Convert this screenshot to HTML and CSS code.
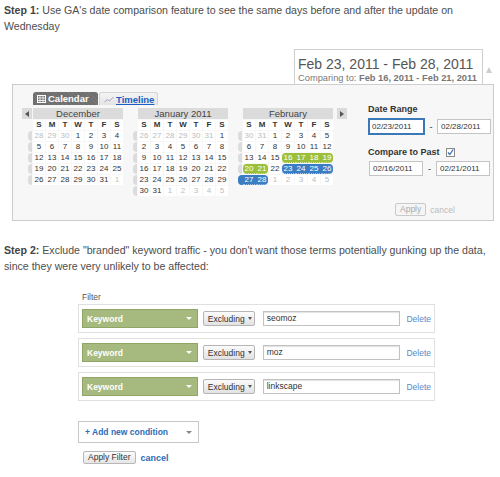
FILE: index.html
```html
<!DOCTYPE html>
<html>
<head>
<meta charset="utf-8">
<link rel="stylesheet" href="styles.css">
</head>
<body>
<p class="para p1"><b>Step 1:</b> Use GA's date comparison feature to see the same days before and after the update on<br>Wednesday</p>

<div class="picker">
  <div class="picker-head">
    <div class="range-box">
      <div class="range-main">Feb 23, 2011 - Feb 28, 2011</div>
      <div class="range-cmp">Comparing to: <b>Feb 16, 2011 - Feb 21, 2011</b></div>
    </div>
    <div class="range-arrow"><i class="tri-up"></i></div>
  </div>
  <div class="panel">
    <div class="cal">
      <div class="tabs">
        <div class="tab tab-on">
          <svg class="ico" width="9" height="8" viewBox="0 0 9 8"><rect x="0.5" y="0.5" width="8" height="7" fill="none" stroke="#fff"/><path d="M0 3h9M0 5.5h9M3 0v8M6 0v8" stroke="#fff" stroke-width="0.8"/></svg>
          <span>Calendar</span>
        </div>
        <div class="tab tab-off">
          <svg class="ico" width="10" height="7" viewBox="0 0 10 7"><path d="M0.5 6L3.5 3.5L5.5 5L9.5 1" fill="none" stroke="#9aa6b4" stroke-width="1"/></svg>
          <a href="#">Timeline</a>
        </div>
      </div>
      <div class="months">
        <div class="month dec">
          <div class="mrow"><div class="lead"><span class="nav"><i class="tri-left"></i></span></div><div class="mhead">December</div></div>
          <div class="mrow"><div class="lead"></div><div class="cells dow"><span>S</span><span>M</span><span>T</span><span>W</span><span>T</span><span>F</span><span>S</span></div></div>
          <div class="mrow"><div class="lead"><i class="blob"></i></div><div class="cells"><span class="o">28</span><span class="o">29</span><span class="o">30</span><span>1</span><span>2</span><span>3</span><span>4</span></div></div>
          <div class="mrow"><div class="lead"><i class="blob"></i></div><div class="cells"><span>5</span><span>6</span><span>7</span><span>8</span><span>9</span><span>10</span><span>11</span></div></div>
          <div class="mrow"><div class="lead"><i class="blob"></i></div><div class="cells"><span>12</span><span>13</span><span>14</span><span>15</span><span>16</span><span>17</span><span>18</span></div></div>
          <div class="mrow"><div class="lead"><i class="blob"></i></div><div class="cells"><span>19</span><span>20</span><span>21</span><span>22</span><span>23</span><span>24</span><span>25</span></div></div>
          <div class="mrow"><div class="lead"><i class="blob"></i></div><div class="cells"><span>26</span><span>27</span><span>28</span><span>29</span><span>30</span><span>31</span><span class="o">1</span></div></div>
        </div>
        <div class="month jan">
          <div class="mrow"><div class="lead"></div><div class="mhead">January 2011</div></div>
          <div class="mrow"><div class="lead"></div><div class="cells dow"><span>S</span><span>M</span><span>T</span><span>W</span><span>T</span><span>F</span><span>S</span></div></div>
          <div class="mrow"><div class="lead"><i class="blob"></i></div><div class="cells"><span class="o">26</span><span class="o">27</span><span class="o">28</span><span class="o">29</span><span class="o">30</span><span class="o">31</span><span>1</span></div></div>
          <div class="mrow"><div class="lead"><i class="blob"></i></div><div class="cells"><span>2</span><span>3</span><span>4</span><span>5</span><span>6</span><span>7</span><span>8</span></div></div>
          <div class="mrow"><div class="lead"><i class="blob"></i></div><div class="cells"><span>9</span><span>10</span><span>11</span><span>12</span><span>13</span><span>14</span><span>15</span></div></div>
          <div class="mrow"><div class="lead"><i class="blob"></i></div><div class="cells"><span>16</span><span>17</span><span>18</span><span>19</span><span>20</span><span>21</span><span>22</span></div></div>
          <div class="mrow"><div class="lead"><i class="blob"></i></div><div class="cells"><span>23</span><span>24</span><span>25</span><span>26</span><span>27</span><span>28</span><span>29</span></div></div>
          <div class="mrow"><div class="lead"><i class="blob"></i></div><div class="cells"><span>30</span><span>31</span><span class="o">1</span><span class="o">2</span><span class="o">3</span><span class="o">4</span><span class="o">5</span></div></div>
        </div>
        <div class="month feb">
          <div class="mrow"><div class="lead"></div><div class="mhead">February</div></div>
          <div class="mrow"><div class="lead"></div><div class="cells dow"><span>S</span><span>M</span><span>T</span><span>W</span><span>T</span><span>F</span><span>S</span></div></div>
          <div class="mrow"><div class="lead"><i class="blob"></i></div><div class="cells"><span class="o">30</span><span class="o">31</span><span>1</span><span>2</span><span>3</span><span>4</span><span>5</span></div></div>
          <div class="mrow"><div class="lead"><i class="blob"></i></div><div class="cells"><span>6</span><span>7</span><span>8</span><span>9</span><span>10</span><span>11</span><span>12</span></div></div>
          <div class="mrow"><div class="lead"><i class="blob"></i></div><div class="cells"><span>13</span><span>14</span><span>15</span><span class="g s">16</span><span class="g">17</span><span class="g">18</span><span class="g e">19</span></div></div>
          <div class="mrow"><div class="lead"><i class="blob"></i></div><div class="cells"><span class="g s">20</span><span class="g e">21</span><span>22</span><span class="b s">23</span><span class="b">24</span><span class="b">25</span><span class="b e">26</span></div></div>
          <div class="mrow"><div class="lead"><i class="blob blob-b"></i></div><div class="cells"><span class="b">27</span><span class="b e">28</span><span class="o">1</span><span class="o">2</span><span class="o">3</span><span class="o">4</span><span class="o">5</span></div></div>
        </div>
        <span class="nav nav-next"><i class="tri-right"></i></span>
      </div>
    </div>

    <div class="form">
      <div class="flabel">Date Range</div>
      <div class="frow">
        <div class="inp focus">02/23/2011</div>
        <span class="dash">-</span>
        <div class="inp">02/28/2011</div>
      </div>
      <div class="flabel cmp">
        <span>Compare to Past</span>
        <svg class="chk" width="9" height="9" viewBox="0 0 9 9"><rect x="0.5" y="0.5" width="8" height="8" fill="#fff" stroke="#8a8a8a"/><path d="M2 4.5L3.8 6.5L7.2 1.5" fill="none" stroke="#3a6fb5" stroke-width="1.3"/></svg>
      </div>
      <div class="frow frow2">
        <div class="inp">02/16/2011</div>
        <span class="dash">-</span>
        <div class="inp">02/21/2011</div>
      </div>
      <div class="apply-row">
        <span class="btn btn-dis">Apply</span>
        <span class="cancel-dis">cancel</span>
      </div>
    </div>
  </div>
</div>

<p class="para p2"><b>Step 2:</b> Exclude "branded" keyword traffic - you don't want those terms potentially gunking up the data,<br>since they were very unlikely to be affected:</p>

<div class="filter">
  <div class="flt-label">Filter</div>
  <div class="cond">
    <div class="kw"><span>Keyword</span><i class="tri-down tri-white"></i></div>
    <div class="excl"><span>Excluding</span><i class="tri-down tri-dark"></i></div>
    <div class="txt">seomoz</div>
    <a class="del" href="#">Delete</a>
  </div>
  <div class="cond">
    <div class="kw"><span>Keyword</span><i class="tri-down tri-white"></i></div>
    <div class="excl"><span>Excluding</span><i class="tri-down tri-dark"></i></div>
    <div class="txt">moz</div>
    <a class="del" href="#">Delete</a>
  </div>
  <div class="cond">
    <div class="kw"><span>Keyword</span><i class="tri-down tri-white"></i></div>
    <div class="excl"><span>Excluding</span><i class="tri-down tri-dark"></i></div>
    <div class="txt">linkscape</div>
    <a class="del" href="#">Delete</a>
  </div>
  <div class="add">
    <span>+ Add new condition</span>
    <i class="tri-down tri-gray"></i>
  </div>
  <div class="apply-filter">
    <span class="btn">Apply Filter</span>
    <a class="cancel" href="#">cancel</a>
  </div>
</div>
</body>
</html>
```

FILE: styles.css
```css
* { box-sizing: border-box; }

body {
  margin: 0;
  padding: 0 4px;
  font-family: "Liberation Sans", Arial, sans-serif;
  color: #4d4d4d;
  background: #fff;
}

.para {
  margin: 0;
  font-size: 10.6px;
  line-height: 16px;
  white-space: nowrap;
}
.para b { color: #444; }
.p1 { padding-top: 2px; }
.p2 { margin-top: 21px; }

/* ---------- date picker ---------- */
.picker { margin: 15px 2px 0 8px; }

.picker-head {
  display: flex;
  justify-content: flex-end;
}

.range-box {
  width: 189px;
  height: 36px;
  border: 1px solid #cfcfcf;
  background: #fff;
  padding: 6px 0 0 3px;
  margin-bottom: -1px;
  position: relative;
  z-index: 1;
}
.range-main {
  font-size: 14px;
  line-height: 16px;
  color: #555;
}
.range-cmp {
  font-size: 9.3px;
  line-height: 12px;
  color: #7a7a7a;
  white-space: nowrap;
}
.range-cmp b { font-weight: bold; color: #777; }

.range-arrow {
  width: 11px;
  display: flex;
  justify-content: center;
  padding-top: 18px;
}
.tri-up {
  display: block;
  width: 0; height: 0;
  border-left: 3.5px solid transparent;
  border-right: 3.5px solid transparent;
  border-bottom: 6px solid #cdcdcd;
}

.panel {
  display: flex;
  align-items: flex-start;
  border: 1px solid #cccccc;
  background: #f7f7f7;
  padding: 7px 0 4px 9px;
}

.cal { display: flex; flex-direction: column; }

.tabs {
  display: flex;
  margin-left: 11px;
  height: 13px;
  gap: 1px;
}
.tab {
  display: flex;
  align-items: center;
  gap: 2px;
  font-size: 9.5px;
  font-weight: bold;
  border-radius: 3px 3px 0 0;
}
.tab-on {
  width: 65px;
  padding-left: 4px;
  color: #fff;
  background: #6e6e6e repeating-linear-gradient(45deg, rgba(255,255,255,0.07) 0 1px, transparent 1px 3px);
}
.tab-off {
  width: 59px;
  padding-left: 4px;
  background: linear-gradient(#f4f4f4, #e4e4e4);
  border: 1px solid #d4d4d4;
  border-bottom: none;
}
.tab-off a { color: #1b5fc6; text-decoration: underline; }
.ico { flex: none; }

.months {
  display: flex;
  align-items: flex-start;
  margin-top: 3px;
}
.month { display: flex; flex-direction: column; gap: 1px; }
.jan, .feb { margin-left: 10px; }

.mrow { display: flex; }
.lead {
  width: 5px;
  display: flex;
  justify-content: flex-end;
  padding-right: 1px;
}
.dec .lead { width: 11px; }

.blob {
  display: block;
  width: 4px;
  height: 10px;
  background: #dcdcdc;
  border-radius: 5px 0 0 5px;
}
.blob-b { background: #3b7dc3; box-shadow: 1px 0 0 #3b7dc3; }

.mhead {
  width: 90px;
  height: 11px;
  background: #dbdbdb;
  color: #444;
  font-size: 9.5px;
  line-height: 11px;
  text-align: center;
}

.nav {
  display: flex;
  align-items: center;
  justify-content: center;
  width: 10px;
  height: 11px;
  background: #dbdbdb;
}
.nav-next { margin-left: 4px; }
.tri-left {
  display: block;
  width: 0; height: 0;
  border-top: 3px solid transparent;
  border-bottom: 3px solid transparent;
  border-right: 4px solid #555;
}
.tri-right {
  display: block;
  width: 0; height: 0;
  border-top: 3px solid transparent;
  border-bottom: 3px solid transparent;
  border-left: 4px solid #555;
}

.cells {
  display: grid;
  grid-template-columns: repeat(7, 12px);
  gap: 1px;
}
.cells span {
  height: 10px;
  background: #fff;
  color: #333;
  font-size: 8px;
  line-height: 10px;
  text-align: center;
}
.dow span { font-weight: bold; }
.cells .o { color: #bdbdbd; }

.cells .g, .cells .b {
  color: #fff;
  border-bottom: 1px dotted rgba(255,255,255,0.55);
}
.cells .g { background: #9cbf39; box-shadow: 1px 0 0 #9cbf39; }
.cells .b { background: #3b7dc3; box-shadow: 1px 0 0 #3b7dc3; }
.cells .s { border-radius: 4px 0 0 4px; }
.cells .e { border-radius: 0 4px 4px 0; box-shadow: none; }

/* ---------- range form ---------- */
.form {
  margin-left: 21px;
  display: flex;
  flex-direction: column;
}
.flabel {
  margin-top: 12px;
  font-size: 9px;
  font-weight: bold;
  line-height: 11px;
  color: #333;
}
.flabel.cmp {
  margin-top: 11px;
  display: flex;
  align-items: center;
  gap: 6px;
  line-height: 12px;
}
.chk { display: block; }

.frow {
  display: flex;
  align-items: center;
  margin-top: 3px;
}
.inp {
  width: 54px;
  height: 15px;
  border: 1px solid #c4c4c4;
  background: #fff;
  color: #333;
  font-size: 8px;
  line-height: 13px;
  padding-left: 3px;
}
.inp.focus {
  width: 57px;
  height: 17px;
  border: 2px solid #3b78b8;
  line-height: 13px;
  padding-left: 2px;
}
.dash {
  width: 12px;
  text-align: center;
  font-size: 9px;
  color: #333;
}
.frow2 { padding-left: 1px; }
.frow2 .dash { width: 13px; }

.apply-row {
  display: flex;
  align-items: center;
  gap: 4px;
  margin-top: 27px;
  margin-left: 27px;
}
.btn {
  display: inline-block;
  height: 13px;
  padding: 0 4px;
  border: 1px solid #b8b8b8;
  border-radius: 2px;
  background: linear-gradient(#fbfbfb, #e6e6e6);
  color: #333;
  font-size: 8.5px;
  line-height: 11px;
}
.btn-dis {
  border-color: #c9c9c9;
  background: #f5f5f5;
  color: #aaa;
}
.cancel-dis { color: #bbb; font-size: 8.5px; }

/* ---------- filter ---------- */
.filter {
  margin-left: 74px;
  width: 357px;
}
.flt-label {
  margin-top: 18px;
  padding-left: 4px;
  font-size: 8.5px;
  line-height: 11px;
  color: #555;
}
.cond {
  display: flex;
  align-items: center;
  height: 29px;
  margin-top: 5px;
  padding: 0 3px;
  border: 1px solid #e0e0e0;
  background: #fff;
}
.flt-label + .cond { margin-top: 1px; }

.kw {
  width: 116px;
  height: 19px;
  display: flex;
  align-items: center;
  justify-content: space-between;
  padding: 0 5px 0 4px;
  background: #a6b97e;
  border: 1px solid #90a566;
  color: #fff;
  font-size: 8.5px;
  font-weight: bold;
}
.excl {
  margin-left: 5px;
  width: 52px;
  height: 15px;
  display: flex;
  align-items: center;
  gap: 3px;
  padding-left: 4px;
  border: 1px solid #b5b5b5;
  border-radius: 2px;
  background: linear-gradient(#fbfbfb, #e2e2e2);
  color: #333;
  font-size: 8.5px;
}
.txt {
  margin-left: 8px;
  width: 138px;
  height: 15px;
  border: 1px solid #c2c2c2;
  box-shadow: inset 0 1px 1px #e2e2e2;
  padding-left: 3px;
  color: #333;
  font-size: 8.5px;
  line-height: 13px;
}
.del {
  margin-left: 6px;
  color: #5a88c6;
  font-size: 8.5px;
  text-decoration: none;
}

.tri-down {
  display: block;
  width: 0; height: 0;
  border-left: 3px solid transparent;
  border-right: 3px solid transparent;
  border-top: 3px solid #fff;
}
.tri-white { border-top-color: #fff; }
.tri-dark { border-top-color: #555; border-left-width: 2.5px; border-right-width: 2.5px; }
.tri-gray { border-top-color: #888; }

.add {
  margin-top: 20px;
  width: 121px;
  height: 22px;
  display: flex;
  align-items: center;
  justify-content: space-between;
  padding: 0 6px;
  border: 1px solid #c8c8c8;
  background: #fff;
  color: #2e6cb8;
  font-size: 8.5px;
  font-weight: bold;
}
.apply-filter {
  margin-top: 8px;
  margin-left: 5px;
  display: flex;
  align-items: center;
  gap: 5px;
}
.cancel {
  color: #2e6cb8;
  font-size: 9px;
  font-weight: bold;
  text-decoration: none;
}
```
